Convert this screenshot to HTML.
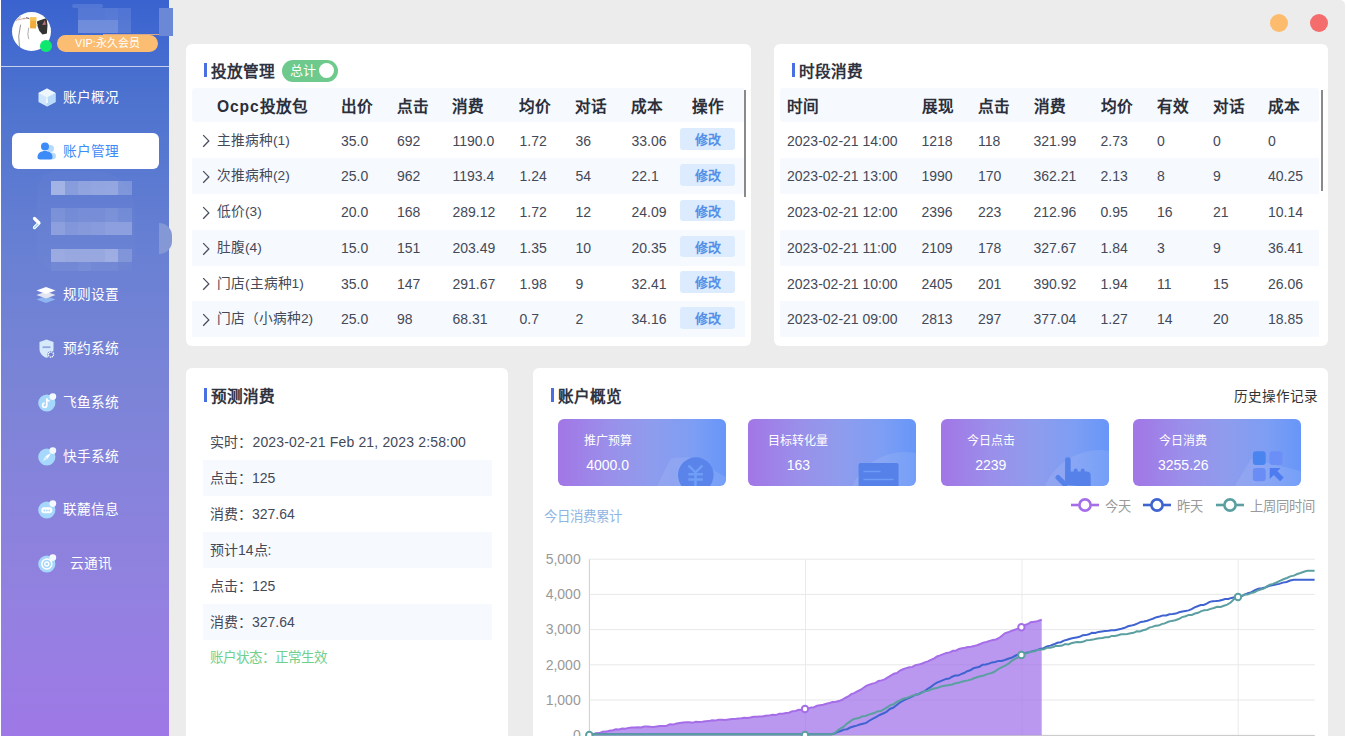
<!DOCTYPE html><html lang="zh-CN"><head><meta charset="utf-8"><style>
*{margin:0;padding:0;box-sizing:border-box;}
html,body{width:1346px;height:736px;overflow:hidden;background:#fff;font-family:"Liberation Sans",sans-serif;color:#333;}
div,span,svg{position:absolute;}
#side{left:1px;top:0;width:168px;height:736px;background:linear-gradient(180deg,#3a63cf 0%,#4f74cf 15%,#6880d3 34%,#7b84d7 53%,#9381e0 81.5%,#9e78e6 100%);}
.sep{left:0;top:66px;width:168px;height:1px;background:#c6cfee;}
.avatar{left:12px;top:12.5px;width:39px;height:39px;border-radius:50%;background:#fff;overflow:hidden;}
.dot{left:39.2px;top:40.3px;width:11.6px;height:11.6px;border-radius:50%;background:#0fe86e;}
.vip{left:56px;top:35px;width:101px;height:17px;border-radius:8.5px;background:#fbbd72;color:#fff;font-size:11px;line-height:17px;text-align:center;white-space:nowrap;}
.mi{left:0;width:168px;height:36px;color:#fff;font-size:13.7px;font-weight:300;white-space:nowrap;}
.mi .tx{left:62.3px;top:0.6px;line-height:36px;}
.mi svg{position:absolute;left:35px;top:8px;}
.act{left:11px;width:147px;background:#fff;border-radius:6px;color:#3d8bf7;}
.act .tx{left:52px;}
.act svg{left:24px;}
.card{background:#fff;border-radius:6px;}
.ttl{font-size:15.6px;font-weight:bold;color:#2f3341;line-height:23.6px;white-space:nowrap;}
.bar{width:3px;height:14px;background:#4a6fe0;}
.row{height:36px;line-height:36px;font-size:14px;color:#444958;white-space:nowrap;}
.row span{top:0;}
.hd{font-weight:bold;color:#2b2f3a;font-size:15.6px;height:33.8px;line-height:33.8px;background:#f6f9fe;border-radius:3px;}
.alt{background:#f6f9fe;}
.row .btn{top:5.7px;width:55.5px;height:21.7px;line-height:23.3px;background:#dcebfd;color:#5590e8;font-size:13px;font-weight:bold;text-align:center;border-radius:3px;}
.sb{width:2px;background:#8a8a8a;}
.stat{height:67px;border-radius:6px;background:linear-gradient(90deg,#a276e6 0%,#9a8fea 30%,#8f9ced 55%,#7d9ef4 80%,#6796f8 100%);overflow:hidden;}
.stat .lb{width:100px;left:0;top:13.5px;text-align:center;color:#fff;font-size:12px;line-height:16px;white-space:nowrap;}
.stat .vl{width:100px;left:0;top:37px;text-align:center;color:#fff;font-size:14px;line-height:18px;white-space:nowrap;}
.lg{font-size:13.3px;color:#999;line-height:16px;white-space:nowrap;}
.yl{font-size:14px;color:#999;line-height:16px;text-align:right;width:50px;white-space:nowrap;}
.info{height:36px;line-height:36px;font-size:14px;color:#444958;white-space:nowrap;}
</style></head><body>
<div style="left:1px;top:0;width:1344px;height:736px;background:#ececec;border-radius:0 5px 0 0;"></div>
<div id="side">
<div class="sep"></div>
<div style="left:70.6px;top:4px;width:31px;height:3.5px;border-radius:2px;background:rgba(255,255,255,0.12);"></div>
<div style="left:76.9px;top:8px;width:13.4px;height:12px;background:rgba(255,255,255,0.13);"></div>
<div style="left:76.9px;top:20px;width:13.4px;height:12.6px;background:rgba(255,255,255,0.25);"></div>
<div style="left:90.30000000000001px;top:8px;width:13.4px;height:12px;background:rgba(255,255,255,0.13);"></div>
<div style="left:90.30000000000001px;top:20px;width:13.4px;height:12.6px;background:rgba(255,255,255,0.25);"></div>
<div style="left:103.7px;top:8px;width:13.4px;height:12px;background:rgba(255,255,255,0.14);"></div>
<div style="left:103.7px;top:20px;width:13.4px;height:12.6px;background:rgba(255,255,255,0.25);"></div>
<div style="left:117.10000000000001px;top:8px;width:13.4px;height:12px;background:rgba(255,255,255,0.11);"></div>
<div style="left:117.10000000000001px;top:20px;width:13.4px;height:12.6px;background:rgba(255,255,255,0.12);"></div>
<div style="left:102px;top:33.8px;width:57px;height:1.6px;background:#d8a986;"></div>
<div class="avatar" style="left:11px;top:12.3px;"><svg width="39" height="39" viewBox="0 0 39 39" style="position:absolute;left:0;top:0"><path d="M34.6 6.1 L35.5 13.3 L34.9 21.5 L30.5 22.4 L27.4 18.9 L25.5 13.9 L24.9 9.6 L27.4 8.6 L31.7 7.1z" fill="#333"/><path d="M30.2 13 L33 8 L33.9 12.7z" fill="#c0707a"/><path d="M18.3 5.2 L24.3 5.6 L24 16.5 L18 16.2z" fill="#f2aa38"/><path d="M18.3 5.2 L24.3 5.6 L24.2 9 L18.2 8.6z" fill="#f4c659"/><path d="M24.5 12 L26.2 12.8 L24.5 14z" fill="#f4c659"/><path d="M4 9 L9 4.5 M6 8 L13 6 M11 7 L17 6" stroke="#b8867e" stroke-width="0.8" fill="none" opacity="0.8"/><path d="M8.6 12.7 Q5.5 24 7.4 35" stroke="#666" stroke-width="0.7" fill="none"/><path d="M16.7 15.8 Q15 23 16.7 27.1" stroke="#777" stroke-width="0.6" fill="none"/><path d="M14 5.5 L17.5 6.8" stroke="#555" stroke-width="0.8"/></svg></div><div class="dot"></div>
<div class="vip">VIP:永久会员</div>
<div class="mi" style="top:79px;"><svg width="20" height="21" viewBox="0 0 20 21" style="left:35.5px;top:8px"><polygon points="10,1.5 18.5,6 18.5,15 10,19.5 1.5,15 1.5,6" fill="#cfe6fc"/><polygon points="10,1.5 18.5,6 10,10.5 1.5,6" fill="#eef6fe"/><polygon points="10,10.5 18.5,6 18.5,15 10,19.5" fill="#b9daf9"/><path d="M10 10.5v4" stroke="#fff" stroke-width="1.2"/><circle cx="10" cy="15" r="1" fill="#fff"/></svg><span class="tx">账户概况</span></div>
<div class="mi act" style="top:133px;height:36px;"><svg width="22" height="22" viewBox="0 0 22 22" style="left:23.5px;top:7.5px"><circle cx="14.5" cy="7.5" r="3.5" fill="#b6dafb"/><ellipse cx="15.5" cy="15" rx="4.5" ry="3.5" fill="#b6dafb"/><circle cx="9" cy="5.5" r="4" fill="#3d8bf7"/><path d="M1.5 16c0-4 3.5-6 7.5-6s7.5 2 7.5 6c0 1.8-1 2.5-2.5 2.5h-10c-1.5 0-2.5-.7-2.5-2.5z" fill="#3d8bf7"/></svg><span class="tx" style="left:51.3px">账户管理</span></div>
<div style="left:50.1px;top:181.3px;width:13.45px;height:13.5px;background:rgba(255,255,255,0.42);"></div>
<div style="left:63.55px;top:181.3px;width:13.45px;height:13.5px;background:rgba(255,255,255,0.25);"></div>
<div style="left:77.0px;top:181.3px;width:13.45px;height:13.5px;background:rgba(255,255,255,0.3);"></div>
<div style="left:90.44999999999999px;top:181.3px;width:13.45px;height:13.5px;background:rgba(255,255,255,0.32);"></div>
<div style="left:103.9px;top:181.3px;width:13.45px;height:13.5px;background:rgba(255,255,255,0.33);"></div>
<div style="left:117.35px;top:181.3px;width:13.45px;height:13.5px;background:rgba(255,255,255,0.2);"></div>
<div style="left:50.1px;top:208.2px;width:13.45px;height:13.5px;background:rgba(255,255,255,0.15);"></div>
<div style="left:63.55px;top:208.2px;width:13.45px;height:13.5px;background:rgba(255,255,255,0.1);"></div>
<div style="left:77.0px;top:208.2px;width:13.45px;height:13.5px;background:rgba(255,255,255,0.12);"></div>
<div style="left:90.44999999999999px;top:208.2px;width:13.45px;height:13.5px;background:rgba(255,255,255,0.12);"></div>
<div style="left:103.9px;top:208.2px;width:13.45px;height:13.5px;background:rgba(255,255,255,0.15);"></div>
<div style="left:117.35px;top:208.2px;width:13.45px;height:13.5px;background:rgba(255,255,255,0.1);"></div>
<div style="left:50.1px;top:221.7px;width:13.45px;height:13.4px;background:rgba(255,255,255,0.25);"></div>
<div style="left:63.55px;top:221.7px;width:13.45px;height:13.4px;background:rgba(255,255,255,0.18);"></div>
<div style="left:77.0px;top:221.7px;width:13.45px;height:13.4px;background:rgba(255,255,255,0.2);"></div>
<div style="left:90.44999999999999px;top:221.7px;width:13.45px;height:13.4px;background:rgba(255,255,255,0.22);"></div>
<div style="left:103.9px;top:221.7px;width:13.45px;height:13.4px;background:rgba(255,255,255,0.25);"></div>
<div style="left:117.35px;top:221.7px;width:13.45px;height:13.4px;background:rgba(255,255,255,0.25);"></div>
<div style="left:50.1px;top:249px;width:13.45px;height:13.3px;background:rgba(255,255,255,0.32);"></div>
<div style="left:63.55px;top:249px;width:13.45px;height:13.3px;background:rgba(255,255,255,0.3);"></div>
<div style="left:77.0px;top:249px;width:13.45px;height:13.3px;background:rgba(255,255,255,0.3);"></div>
<div style="left:90.44999999999999px;top:249px;width:13.45px;height:13.3px;background:rgba(255,255,255,0.3);"></div>
<div style="left:103.9px;top:249px;width:13.45px;height:13.3px;background:rgba(255,255,255,0.35);"></div>
<div style="left:117.35px;top:249px;width:13.45px;height:13.3px;background:rgba(255,255,255,0.15);"></div>
<div style="left:50.1px;top:262.3px;width:13.45px;height:8.7px;background:rgba(255,255,255,0.05);"></div>
<div style="left:63.55px;top:262.3px;width:13.45px;height:8.7px;background:rgba(255,255,255,0.05);"></div>
<div style="left:77.0px;top:262.3px;width:13.45px;height:8.7px;background:rgba(255,255,255,0.08);"></div>
<div style="left:90.44999999999999px;top:262.3px;width:13.45px;height:8.7px;background:rgba(255,255,255,0.05);"></div>
<div style="left:103.9px;top:262.3px;width:13.45px;height:8.7px;background:rgba(255,255,255,0.05);"></div>
<div style="left:117.35px;top:262.3px;width:13.45px;height:8.7px;background:rgba(255,255,255,0.02);"></div>
<div style="left:36px;top:171px;width:98px;height:100px;border-radius:20px 40px 20px 20px;background:rgba(255,255,255,0.02);"></div>
<svg width="10" height="14" viewBox="0 0 10 14" style="left:31px;top:216px"><path d="M2.5 2.5l4.5 4.5-4.5 4.5" stroke="#fff" stroke-width="3.2" stroke-linecap="round" stroke-linejoin="round" fill="none"/><path d="M5.8 8.2l-3.2 3.2" stroke="#8fd0fa" stroke-width="1.3" stroke-linecap="round"/></svg>
<div class="mi" style="top:276px;"><svg width="20" height="22" viewBox="0 0 20 22" style="left:35px;top:8px"><polygon points="10,12 19.5,15.5 10,19 0.5,15.5" fill="#8db5ef"/><polygon points="10,7.5 19.5,11 10,14.5 0.5,11" fill="#e3e6f0"/><polygon points="10,3 19.5,6.5 10,10 0.5,6.5" fill="#ffffff"/></svg><span class="tx">规则设置</span></div>
<div class="mi" style="top:330px;"><svg width="20" height="22" viewBox="0 0 20 22" style="left:36px;top:8px"><path d="M9.5 1.5l7 2.5v7c0 4.5-3 7.3-7 8.8-4-1.5-7-4.3-7-8.8v-7z" fill="#d6eafc"/><rect x="5.5" y="8.3" width="8" height="1.8" fill="#8fa8e6"/><circle cx="14" cy="16.5" r="3.6" fill="#6f80d6"/><circle cx="14" cy="16.5" r="2.6" fill="none" stroke="#fff" stroke-width="1.4" stroke-dasharray="1.3 0.7"/></svg><span class="tx">预约系统</span></div>
<div class="mi" style="top:384px;"><svg width="22" height="22" viewBox="0 0 22 22" style="left:34px;top:7px"><circle cx="11.8" cy="12" r="8.6" fill="#a5d8fc"/><circle cx="17.8" cy="5.6" r="3.4" fill="#f4f8ff"/><path d="M11.8 7.5v6.8a2.1 2.1 0 1 1-2.1-2.1" stroke="#fff" stroke-width="1.7" fill="none"/><path d="M11.8 7.6c.3 1.6 1.3 2.4 2.8 2.5" stroke="#fff" stroke-width="1.5" fill="none"/></svg><span class="tx">飞鱼系统</span></div>
<div class="mi" style="top:438px;"><svg width="22" height="22" viewBox="0 0 22 22" style="left:34px;top:7px"><circle cx="11.8" cy="12" r="8.6" fill="#a5d8fc"/><circle cx="17.8" cy="5.6" r="3.4" fill="#f4f8ff"/><path d="M16 8l-3 5.3-5.2 3 3-5.3z" fill="#fff"/><path d="M13 13.3l-5.2 3 3-5.3z" fill="#d8eefe"/></svg><span class="tx">快手系统</span></div>
<div class="mi" style="top:491px;"><svg width="22" height="22" viewBox="0 0 22 22" style="left:34px;top:7px"><circle cx="11.8" cy="12" r="8.6" fill="#a5d8fc"/><circle cx="17.8" cy="5.6" r="3.4" fill="#f4f8ff"/><rect x="6.3" y="9.3" width="11" height="6" rx="2.8" fill="#fff"/><circle cx="9.3" cy="12.5" r="0.9" fill="#a5d8fc"/><circle cx="11.8" cy="12.5" r="0.9" fill="#a5d8fc"/><circle cx="14.3" cy="12.5" r="0.9" fill="#a5d8fc"/></svg><span class="tx">联麓信息</span></div>
<div class="mi" style="top:545px;"><svg width="22" height="22" viewBox="0 0 22 22" style="left:34px;top:7px"><circle cx="11.8" cy="12" r="8.6" fill="#a5d8fc"/><circle cx="17.8" cy="5.6" r="3.4" fill="#f4f8ff"/><circle cx="11.8" cy="12" r="5" fill="none" stroke="#fff" stroke-width="1.5"/><circle cx="11.8" cy="12" r="2" fill="none" stroke="#fff" stroke-width="1.3"/></svg><span class="tx" style="left:69px">云通讯</span></div>
</div>
<div style="left:159px;top:8px;width:13.5px;height:27.7px;background:#6a88d6;"></div>
<div style="left:159px;top:222.8px;width:13.3px;height:31.4px;border-radius:0 16px 16px 0/0 15.7px 15.7px 0;background:#8498d6;"></div>
<div style="left:1269.5px;top:13.6px;width:18.2px;height:18.2px;border-radius:50%;background:#fdbb6d;"></div>
<div style="left:1309.9px;top:13.6px;width:18.2px;height:18.2px;border-radius:50%;background:#f56c6c;"></div>
<div class="card" style="left:186px;top:44px;width:565px;height:302px;">
<div class="bar" style="left:18px;top:19px;"></div>
<div class="ttl" style="left:25px;top:16px;">投放管理</div>
<div style="left:96px;top:15.5px;width:56px;height:22px;border-radius:11px;background:#6dca8c;"><span style="left:8px;top:0;line-height:22px;color:#fff;font-size:13px;">总计</span><span style="left:37px;top:3.5px;width:15px;height:15px;border-radius:50%;background:#fff;"></span></div>
<div class="row hd" style="left:5.699999999999989px;top:44.2px;width:553px;"><span style="left:25.30000000000001px;line-height:37.2px"><i style="font-style:normal;letter-spacing:0.9px">Ocpc</i>投放包</span><span style="left:149.3px;line-height:37.2px">出价</span><span style="left:205.3px;line-height:37.2px">点击</span><span style="left:260.8px;line-height:37.2px">消费</span><span style="left:327.8px;line-height:37.2px">均价</span><span style="left:383.8px;line-height:37.2px">对话</span><span style="left:439.8px;line-height:37.2px">成本</span><span style="left:500.3px;line-height:37.2px">操作</span></div>
<div class="row" style="left:5.699999999999989px;top:78.6px;width:553px;"><svg width="9" height="14" viewBox="0 0 9 14" style="left:10.600000000000023px;top:11.8px"><path d="M1.2 1.1l5.6 5.8-5.6 5.8" stroke="#4a4f5e" stroke-width="1.3" fill="none"/></svg><span style="left:25.30000000000001px;font-size:13.7px">主推病种(1)</span><span style="left:149.3px">35.0</span><span style="left:205.3px">692</span><span style="left:260.8px">1190.0</span><span style="left:327.8px">1.72</span><span style="left:383.8px">36</span><span style="left:439.8px">33.06</span><span class="btn" style="left:488.3px;">修改</span></div>
<div class="row alt" style="left:5.699999999999989px;top:114.35px;width:553px;"><svg width="9" height="14" viewBox="0 0 9 14" style="left:10.600000000000023px;top:11.8px"><path d="M1.2 1.1l5.6 5.8-5.6 5.8" stroke="#4a4f5e" stroke-width="1.3" fill="none"/></svg><span style="left:25.30000000000001px;font-size:13.7px">次推病种(2)</span><span style="left:149.3px">25.0</span><span style="left:205.3px">962</span><span style="left:260.8px">1193.4</span><span style="left:327.8px">1.24</span><span style="left:383.8px">54</span><span style="left:439.8px">22.1</span><span class="btn" style="left:488.3px;">修改</span></div>
<div class="row" style="left:5.699999999999989px;top:150.1px;width:553px;"><svg width="9" height="14" viewBox="0 0 9 14" style="left:10.600000000000023px;top:11.8px"><path d="M1.2 1.1l5.6 5.8-5.6 5.8" stroke="#4a4f5e" stroke-width="1.3" fill="none"/></svg><span style="left:25.30000000000001px;font-size:13.7px">低价(3)</span><span style="left:149.3px">20.0</span><span style="left:205.3px">168</span><span style="left:260.8px">289.12</span><span style="left:327.8px">1.72</span><span style="left:383.8px">12</span><span style="left:439.8px">24.09</span><span class="btn" style="left:488.3px;">修改</span></div>
<div class="row alt" style="left:5.699999999999989px;top:185.85px;width:553px;"><svg width="9" height="14" viewBox="0 0 9 14" style="left:10.600000000000023px;top:11.8px"><path d="M1.2 1.1l5.6 5.8-5.6 5.8" stroke="#4a4f5e" stroke-width="1.3" fill="none"/></svg><span style="left:25.30000000000001px;font-size:13.7px">肚腹(4)</span><span style="left:149.3px">15.0</span><span style="left:205.3px">151</span><span style="left:260.8px">203.49</span><span style="left:327.8px">1.35</span><span style="left:383.8px">10</span><span style="left:439.8px">20.35</span><span class="btn" style="left:488.3px;">修改</span></div>
<div class="row" style="left:5.699999999999989px;top:221.60000000000002px;width:553px;"><svg width="9" height="14" viewBox="0 0 9 14" style="left:10.600000000000023px;top:11.8px"><path d="M1.2 1.1l5.6 5.8-5.6 5.8" stroke="#4a4f5e" stroke-width="1.3" fill="none"/></svg><span style="left:25.30000000000001px;font-size:13.7px">门店(主病种1)</span><span style="left:149.3px">35.0</span><span style="left:205.3px">147</span><span style="left:260.8px">291.67</span><span style="left:327.8px">1.98</span><span style="left:383.8px">9</span><span style="left:439.8px">32.41</span><span class="btn" style="left:488.3px;">修改</span></div>
<div class="row alt" style="left:5.699999999999989px;top:257.35px;width:553px;"><svg width="9" height="14" viewBox="0 0 9 14" style="left:10.600000000000023px;top:11.8px"><path d="M1.2 1.1l5.6 5.8-5.6 5.8" stroke="#4a4f5e" stroke-width="1.3" fill="none"/></svg><span style="left:25.30000000000001px;font-size:13.7px">门店（小病种2)</span><span style="left:149.3px">25.0</span><span style="left:205.3px">98</span><span style="left:260.8px">68.31</span><span style="left:327.8px">0.7</span><span style="left:383.8px">2</span><span style="left:439.8px">34.16</span><span class="btn" style="left:488.3px;">修改</span></div>
<div class="sb" style="left:557.5px;top:45.5px;height:107px;"></div>
</div>
<div class="card" style="left:774px;top:44px;width:554px;height:302px;">
<div class="bar" style="left:18px;top:19px;"></div>
<div class="ttl" style="left:25px;top:16px;">时段消费</div>
<div class="row hd" style="left:6px;top:44.2px;width:539px;"><span style="left:7px;line-height:37.2px">时间</span><span style="left:141.5px;line-height:37.2px">展现</span><span style="left:198px;line-height:37.2px">点击</span><span style="left:253.5px;line-height:37.2px">消费</span><span style="left:320.5px;line-height:37.2px">均价</span><span style="left:377px;line-height:37.2px">有效</span><span style="left:433px;line-height:37.2px">对话</span><span style="left:488px;line-height:37.2px">成本</span></div>
<div class="row" style="left:6px;top:78.6px;width:539px;"><span style="left:7px">2023-02-21 14:00</span><span style="left:141.5px">1218</span><span style="left:198px">118</span><span style="left:253.5px">321.99</span><span style="left:320.5px">2.73</span><span style="left:377px">0</span><span style="left:433px">0</span><span style="left:488px">0</span></div>
<div class="row alt" style="left:6px;top:114.35px;width:539px;"><span style="left:7px">2023-02-21 13:00</span><span style="left:141.5px">1990</span><span style="left:198px">170</span><span style="left:253.5px">362.21</span><span style="left:320.5px">2.13</span><span style="left:377px">8</span><span style="left:433px">9</span><span style="left:488px">40.25</span></div>
<div class="row" style="left:6px;top:150.1px;width:539px;"><span style="left:7px">2023-02-21 12:00</span><span style="left:141.5px">2396</span><span style="left:198px">223</span><span style="left:253.5px">212.96</span><span style="left:320.5px">0.95</span><span style="left:377px">16</span><span style="left:433px">21</span><span style="left:488px">10.14</span></div>
<div class="row alt" style="left:6px;top:185.85px;width:539px;"><span style="left:7px">2023-02-21 11:00</span><span style="left:141.5px">2109</span><span style="left:198px">178</span><span style="left:253.5px">327.67</span><span style="left:320.5px">1.84</span><span style="left:377px">3</span><span style="left:433px">9</span><span style="left:488px">36.41</span></div>
<div class="row" style="left:6px;top:221.60000000000002px;width:539px;"><span style="left:7px">2023-02-21 10:00</span><span style="left:141.5px">2405</span><span style="left:198px">201</span><span style="left:253.5px">390.92</span><span style="left:320.5px">1.94</span><span style="left:377px">11</span><span style="left:433px">15</span><span style="left:488px">26.06</span></div>
<div class="row alt" style="left:6px;top:257.35px;width:539px;"><span style="left:7px">2023-02-21 09:00</span><span style="left:141.5px">2813</span><span style="left:198px">297</span><span style="left:253.5px">377.04</span><span style="left:320.5px">1.27</span><span style="left:377px">14</span><span style="left:433px">20</span><span style="left:488px">18.85</span></div>
<div class="sb" style="left:547px;top:45.5px;height:101px;"></div>
</div>
<div class="card" style="left:186px;top:368px;width:322px;height:400px;">
<div class="bar" style="left:18px;top:20px;"></div>
<div class="ttl" style="left:25px;top:17px;">预测消费</div>
<div class="info" style="left:17px;top:56px;width:289px;"><span style="left:7px;top:0;letter-spacing:0.16px;">实时：2023-02-21 Feb 21, 2023 2:58:00</span></div>
<div class="info" style="left:17px;top:92px;width:289px;background:#f6f9fe;"><span style="left:7px;top:0;">点击：125</span></div>
<div class="info" style="left:17px;top:128px;width:289px;"><span style="left:7px;top:0;">消费：327.64</span></div>
<div class="info" style="left:17px;top:164px;width:289px;background:#f6f9fe;"><span style="left:7px;top:0;">预计14点:</span></div>
<div class="info" style="left:17px;top:200px;width:289px;"><span style="left:7px;top:0;">点击：125</span></div>
<div class="info" style="left:17px;top:236px;width:289px;background:#f6f9fe;"><span style="left:7px;top:0;">消费：327.64</span></div>
<div class="info" style="left:17px;top:272px;width:289px;color:#6fd08e;font-size:13.5px;"><span style="left:7px;top:0;">账户状态：正常生效</span></div>
</div>
<div class="card" style="left:533px;top:368px;width:795px;height:400px;">
<div class="bar" style="left:18px;top:20px;"></div>
<div class="ttl" style="left:25px;top:17px;">账户概览</div>
<div style="left:701px;top:19.5px;font-size:13.6px;line-height:18px;color:#333;white-space:nowrap;">历史操作记录</div>
<div class="stat" style="left:24.600000000000023px;top:51px;width:168px;"><svg width="168" height="67" style="left:0;top:0"><path d="M99 67 L112 41 Q114 38.5 118 38.5 L132 38.5 L168 58 L168 67z" fill="rgba(255,255,255,0.09)"/><circle cx="137.8" cy="56.1" r="17.8" fill="#5a84ea"/><path d="M130.5 46.5l7 6.8 7-6.8M137.5 53.3v14M130.3 55.3h14.6M130.3 60.5h14.6" stroke="#6f9ef7" stroke-width="2.5" fill="none"/></svg><span class="lb">推广预算</span><span class="vl">4000.0</span></div>
<div class="stat" style="left:215.39999999999998px;top:51px;width:168px;"><svg width="168" height="67" style="left:0;top:0"><circle cx="157" cy="91" r="58" fill="rgba(255,255,255,0.09)"/><path d="M110.6 68V46a2 2 0 0 1 2-2h36a2 2 0 0 1 2 2v22z" fill="#5681e9"/><path d="M115.5 52.5h17M115.5 60.5h30" stroke="#6d9cf6" stroke-width="1.6"/></svg><span class="lb">目标转化量</span><span class="vl">163</span></div>
<div class="stat" style="left:407.79999999999995px;top:51px;width:168px;"><svg width="168" height="67" style="left:0;top:0"><circle cx="159" cy="91" r="60" fill="rgba(255,255,255,0.09)"/><path d="M124.1 66V41a2.8 2.8 0 0 1 5.6 0v11.5h3v-1a2 2 0 0 1 4 0v1h3v-1a2 2 0 0 1 4 0v1h2a4 4 0 0 1 4 4V68z" fill="#5681e9"/><path d="M117 58.5l7 7" stroke="#5681e9" stroke-width="5" stroke-linecap="round"/></svg><span class="lb">今日点击</span><span class="vl">2239</span></div>
<div class="stat" style="left:600.3px;top:51px;width:168px;"><svg width="168" height="67" style="left:0;top:0"><path d="M100 70 L118 40 L168 52 L168 70z" fill="rgba(255,255,255,0.09)"/><rect x="119.9" y="32.2" width="12.8" height="13.8" rx="3" fill="#4a85ef"/><rect x="136.5" y="32.2" width="13" height="13.8" rx="3" fill="#6c8ff7"/><rect x="119.9" y="49" width="12.8" height="13.3" rx="3" fill="#6a8df5"/><path d="M136.7 49h11l-3.3 3.3 6.3 6.3-3.6 3.6-6.3-6.3-4.1 4.1z" fill="#4e7cf0"/></svg><span class="lb">今日消费</span><span class="vl">3255.26</span></div>
<div style="left:11px;top:140px;font-size:13.5px;color:#8fb5e3;line-height:18px;white-space:nowrap;">今日消费累计</div>
<svg style="position:absolute;left:537.5999999999999px;top:129.7px" width="28" height="14"><line x1="0" y1="7" x2="28" y2="7" stroke="#a56ee8" stroke-width="2.6"/><circle cx="14" cy="7" r="5.6" fill="#fff" stroke="#a56ee8" stroke-width="2.6"/></svg>
<div class="lg" style="left:571.5999999999999px;top:131px;">今天</div>
<svg style="position:absolute;left:610px;top:129.7px" width="28" height="14"><line x1="0" y1="7" x2="28" y2="7" stroke="#3f63d0" stroke-width="2.6"/><circle cx="14" cy="7" r="5.6" fill="#fff" stroke="#3f63d0" stroke-width="2.6"/></svg>
<div class="lg" style="left:644px;top:131px;">昨天</div>
<svg style="position:absolute;left:682.8px;top:129.7px" width="28" height="14"><line x1="0" y1="7" x2="28" y2="7" stroke="#5b9fa1" stroke-width="2.6"/><circle cx="14" cy="7" r="5.6" fill="#fff" stroke="#5b9fa1" stroke-width="2.6"/></svg>
<div class="lg" style="left:716.8px;top:131px;">上周同时间</div>
</div>
<svg style="position:absolute;left:0;top:0" width="1346" height="736"><line x1="589.4" y1="559.2" x2="1314.8" y2="559.2" stroke="#e8e8e8" stroke-width="1"/><line x1="589.4" y1="594.4" x2="1314.8" y2="594.4" stroke="#e8e8e8" stroke-width="1"/><line x1="589.4" y1="629.6" x2="1314.8" y2="629.6" stroke="#e8e8e8" stroke-width="1"/><line x1="589.4" y1="664.8" x2="1314.8" y2="664.8" stroke="#e8e8e8" stroke-width="1"/><line x1="589.4" y1="700" x2="1314.8" y2="700" stroke="#e8e8e8" stroke-width="1"/><line x1="589.4" y1="735.2" x2="1314.8" y2="735.2" stroke="#e8e8e8" stroke-width="1"/><line x1="805.5" y1="559.2" x2="805.5" y2="736" stroke="#eaeaea" stroke-width="1"/><line x1="1022" y1="559.2" x2="1022" y2="736" stroke="#eaeaea" stroke-width="1"/><line x1="1238.2" y1="559.2" x2="1238.2" y2="736" stroke="#eaeaea" stroke-width="1"/><line x1="589.4" y1="559.2" x2="589.4" y2="736" stroke="#cfcfcf" stroke-width="1"/><line x1="589.4" y1="735.5" x2="1314.8" y2="735.5" stroke="#cccccc" stroke-width="1"/><polygon points="589.3,735 592.7,734.1 596.0,733.2 599.4,733.1 602.7,731.7 606.1,731.6 609.4,730.7 612.8,730.2 615.9,729.3 619.1,729.5 622.2,728.6 625.4,728.7 628.5,727.9 631.7,727.5 634.9,727.6 638.0,727.3 641.1,727.5 644.2,726.5 647.4,726.5 650.5,726.8 653.6,727.0 656.8,726.4 659.9,726.0 663.0,726.0 666.4,725.9 669.8,724.2 673.2,724.6 676.6,723.5 679.8,723.0 683.0,722.6 686.2,722.3 689.5,722.3 692.7,722.7 695.9,721.7 699.1,721.9 702.3,721.7 705.6,721.2 708.8,721.1 712.0,720.3 715.2,720.6 718.5,719.8 721.8,719.7 725.1,720.0 728.5,719.4 731.8,718.9 735.1,719.0 738.4,718.6 741.4,718.2 744.4,717.7 747.4,718.0 750.4,717.5 753.4,716.7 756.4,716.8 759.4,716.4 762.4,716.5 765.4,715.7 768.9,715.6 772.4,714.7 775.8,715.1 779.3,713.7 782.8,713.8 786.0,713.0 789.1,712.7 792.3,711.3 795.5,711.0 798.7,709.8 801.8,709.9 805.0,709.0 808.0,708.6 811.0,707.6 814.0,707.2 817.0,705.8 820.0,705.3 823.2,704.7 826.3,703.8 829.5,703.0 832.7,702.1 835.9,701.8 839.0,701.1 842.2,699.8 845.2,698.0 848.2,696.5 851.2,694.1 854.2,693.1 857.2,691.3 860.2,690.0 863.2,688.0 866.2,685.9 869.3,684.6 872.4,683.6 875.5,682.9 878.5,681.0 881.6,680.4 884.7,679.4 887.8,677.3 890.8,675.6 893.9,673.8 897.0,673.0 900.0,670.5 903.1,669.3 906.2,668.1 909.3,667.3 912.4,666.9 915.4,665.1 918.5,664.6 921.6,663.7 924.7,662.4 927.8,661.4 930.9,659.9 933.9,658.6 937.0,656.5 940.1,655.4 943.3,654.1 946.5,652.9 949.8,652.4 953.0,650.8 956.0,650.7 959.0,649.0 962.0,648.3 965.0,647.7 968.0,647.0 971.0,646.7 974.0,646.1 977.0,645.3 980.2,644.0 983.3,642.6 986.5,642.0 989.7,640.9 992.9,640.1 996.0,639.5 999.2,637.9 1004.8,633.3 1008.1,632.3 1011.4,630.9 1014.8,629.8 1018.1,628.6 1021.4,627.2 1024.5,625.0 1027.5,624.3 1030.6,622.2 1034.0,621.8 1037.4,621.2 1040.8,620.0 1041.7,619.8 1041.7,735.2 589.3,735.2" fill="#9d6ce8" fill-opacity="0.7"/><polyline points="589.3,735 592.7,734.1 596.0,733.2 599.4,733.1 602.7,731.7 606.1,731.6 609.4,730.7 612.8,730.2 615.9,729.3 619.1,729.5 622.2,728.6 625.4,728.7 628.5,727.9 631.7,727.5 634.9,727.6 638.0,727.3 641.1,727.5 644.2,726.5 647.4,726.5 650.5,726.8 653.6,727.0 656.8,726.4 659.9,726.0 663.0,726.0 666.4,725.9 669.8,724.2 673.2,724.6 676.6,723.5 679.8,723.0 683.0,722.6 686.2,722.3 689.5,722.3 692.7,722.7 695.9,721.7 699.1,721.9 702.3,721.7 705.6,721.2 708.8,721.1 712.0,720.3 715.2,720.6 718.5,719.8 721.8,719.7 725.1,720.0 728.5,719.4 731.8,718.9 735.1,719.0 738.4,718.6 741.4,718.2 744.4,717.7 747.4,718.0 750.4,717.5 753.4,716.7 756.4,716.8 759.4,716.4 762.4,716.5 765.4,715.7 768.9,715.6 772.4,714.7 775.8,715.1 779.3,713.7 782.8,713.8 786.0,713.0 789.1,712.7 792.3,711.3 795.5,711.0 798.7,709.8 801.8,709.9 805.0,709.0 808.0,708.6 811.0,707.6 814.0,707.2 817.0,705.8 820.0,705.3 823.2,704.7 826.3,703.8 829.5,703.0 832.7,702.1 835.9,701.8 839.0,701.1 842.2,699.8 845.2,698.0 848.2,696.5 851.2,694.1 854.2,693.1 857.2,691.3 860.2,690.0 863.2,688.0 866.2,685.9 869.3,684.6 872.4,683.6 875.5,682.9 878.5,681.0 881.6,680.4 884.7,679.4 887.8,677.3 890.8,675.6 893.9,673.8 897.0,673.0 900.0,670.5 903.1,669.3 906.2,668.1 909.3,667.3 912.4,666.9 915.4,665.1 918.5,664.6 921.6,663.7 924.7,662.4 927.8,661.4 930.9,659.9 933.9,658.6 937.0,656.5 940.1,655.4 943.3,654.1 946.5,652.9 949.8,652.4 953.0,650.8 956.0,650.7 959.0,649.0 962.0,648.3 965.0,647.7 968.0,647.0 971.0,646.7 974.0,646.1 977.0,645.3 980.2,644.0 983.3,642.6 986.5,642.0 989.7,640.9 992.9,640.1 996.0,639.5 999.2,637.9 1004.8,633.3 1008.1,632.3 1011.4,630.9 1014.8,629.8 1018.1,628.6 1021.4,627.2 1024.5,625.0 1027.5,624.3 1030.6,622.2 1034.0,621.8 1037.4,621.2 1040.8,620.0 1041.7,619.8" fill="none" stroke="#a56ee8" stroke-width="2"/><polyline points="589.3,734.2 592.3,734.2 595.3,734.2 598.4,734.2 601.4,734.2 604.4,734.2 607.4,734.2 610.5,734.2 613.5,734.2 616.5,734.2 619.5,734.2 622.5,734.2 625.6,734.2 628.6,734.2 631.6,734.2 634.6,734.2 637.7,734.2 640.7,734.2 643.7,734.2 646.7,734.2 649.8,734.2 652.8,734.2 655.8,734.2 658.8,734.2 661.8,734.2 664.9,734.2 667.9,734.2 670.9,734.2 673.9,734.2 677.0,734.2 680.0,734.2 683.0,734.2 686.0,734.2 689.0,734.2 692.1,734.2 695.1,734.2 698.1,734.2 701.1,734.2 704.2,734.2 707.2,734.2 710.2,734.2 713.2,734.2 716.2,734.2 719.3,734.2 722.3,734.2 725.3,734.2 728.3,734.2 731.4,734.2 734.4,734.2 737.4,734.2 740.4,734.2 743.4,734.2 746.5,734.2 749.5,734.2 752.5,734.2 755.5,734.2 758.6,734.2 761.6,734.2 764.6,734.2 767.6,734.2 770.6,734.2 773.7,734.2 776.7,734.2 779.7,734.2 782.7,734.2 785.8,734.2 788.8,734.2 791.8,734.2 794.8,734.2 797.9,734.2 800.9,734.2 803.9,734.2 806.9,734.2 809.9,734.2 813.0,734.2 816.0,734.2 819.0,734.2 822.0,734.2 825.1,734.2 828.1,734.2 831.1,734.2 834.3,733.5 837.5,732.0 840.7,731.0 843.9,729.6 847.1,729.2 850.2,727.5 853.4,726.5 856.6,725.6 859.8,724.5 863.0,723.7 866.2,722.9 869.6,720.5 873.0,718.6 876.4,716.9 879.7,715.0 883.1,713.5 886.5,711.8 889.8,709.0 893.1,707.8 896.5,705.3 899.8,702.5 903.1,700.7 906.2,699.0 909.3,697.8 912.4,696.4 915.4,694.7 918.5,694.2 921.6,692.4 924.7,691.1 927.8,688.7 930.9,686.8 933.9,684.5 937.0,682.7 940.1,681.3 943.1,680.1 946.1,678.9 949.1,678.6 952.1,676.7 955.1,675.5 958.1,675.6 961.1,674.1 964.1,673.0 967.2,671.2 970.3,670.3 973.4,668.3 976.4,667.5 979.5,666.7 982.6,664.7 985.8,664.5 988.9,663.6 992.1,662.4 995.3,661.9 998.5,660.9 1001.6,661.0 1004.8,660.0 1008.1,658.8 1011.4,657.8 1014.8,656.0 1018.1,654.5 1021.4,653.6 1024.5,653.2 1027.6,652.6 1030.7,651.7 1033.8,650.9 1036.9,650.1 1040.0,649.0 1043.5,648.2 1046.9,646.4 1050.4,645.6 1053.9,644.3 1057.3,642.8 1060.8,642.2 1063.9,640.6 1067.0,639.8 1070.2,638.8 1073.3,638.0 1076.4,637.4 1079.5,636.8 1082.7,635.3 1085.8,635.1 1088.9,634.3 1092.0,632.8 1095.3,633.0 1098.5,631.9 1101.8,631.4 1105.1,631.0 1108.4,630.7 1111.6,630.3 1114.9,630.3 1118.2,629.5 1121.4,628.8 1124.7,627.8 1128.0,626.3 1131.3,625.6 1134.5,624.7 1137.8,623.4 1140.9,621.9 1144.0,621.5 1147.2,620.8 1150.3,619.6 1153.4,618.5 1156.5,617.2 1159.7,616.5 1163.0,615.4 1166.2,615.5 1169.4,614.2 1172.7,614.1 1175.9,613.6 1179.1,612.3 1182.4,611.6 1185.6,611.0 1188.6,610.4 1191.6,609.1 1194.6,607.3 1197.6,606.2 1200.7,605.1 1203.7,605.0 1206.7,603.7 1209.7,601.9 1212.7,601.2 1215.8,601.1 1218.9,600.8 1222.0,600.0 1225.2,599.1 1228.3,598.9 1231.4,597.9 1234.5,597.3 1237.6,597.4 1241.1,596.5 1244.5,594.7 1248.0,593.1 1251.5,592.1 1254.9,590.1 1258.4,588.7 1261.9,588.3 1265.3,587.5 1268.8,586.0 1272.3,585.2 1275.7,584.5 1279.2,583.9 1282.8,582.6 1286.5,582.0 1290.2,580.5 1293.8,579.8 1297.3,579.8 1300.7,579.8 1304.2,579.8 1307.7,579.8 1311.1,579.8 1314.6,579.8" fill="none" stroke="#3f63d0" stroke-width="2"/><polyline points="589.3,734.2 592.3,734.2 595.3,734.2 598.3,734.2 601.3,734.2 604.3,734.2 607.4,734.2 610.4,734.2 613.4,734.2 616.4,734.2 619.4,734.2 622.4,734.2 625.4,734.2 628.4,734.2 631.4,734.2 634.4,734.2 637.4,734.2 640.4,734.2 643.5,734.2 646.5,734.2 649.5,734.2 652.5,734.2 655.5,734.2 658.5,734.2 661.5,734.2 664.5,734.2 667.5,734.2 670.5,734.2 673.5,734.2 676.6,734.2 679.6,734.2 682.6,734.2 685.6,734.2 688.6,734.2 691.6,734.2 694.6,734.2 697.6,734.2 700.6,734.2 703.6,734.2 706.6,734.2 709.6,734.2 712.7,734.2 715.7,734.2 718.7,734.2 721.7,734.2 724.7,734.2 727.7,734.2 730.7,734.2 733.7,734.2 736.7,734.2 739.7,734.2 742.7,734.2 745.7,734.2 748.8,734.2 751.8,734.2 754.8,734.2 757.8,734.2 760.8,734.2 763.8,734.2 766.8,734.2 769.8,734.2 772.8,734.2 775.8,734.2 778.8,734.2 781.9,734.2 784.9,734.2 787.9,734.2 790.9,734.2 793.9,734.2 796.9,734.2 799.9,734.2 802.9,734.2 805.9,734.2 808.9,734.2 811.9,734.2 814.9,734.2 818.0,734.2 821.0,734.2 824.0,734.2 827.0,734.2 830.0,734.2 833.0,734.2 836.4,731.6 839.8,728.8 843.1,727.2 846.5,724.0 849.9,721.6 853.3,719.2 856.4,718.4 859.5,717.8 862.5,716.3 865.6,716.0 868.7,714.6 871.8,713.7 874.8,712.8 877.9,711.2 881.0,710.9 884.2,709.1 887.3,707.1 890.5,705.1 893.6,704.3 896.8,701.9 899.9,700.5 903.1,698.8 906.2,698.1 909.3,696.9 912.4,695.6 915.4,694.8 918.5,693.9 921.6,693.1 924.7,691.3 927.8,690.9 930.9,689.5 933.9,688.5 937.0,688.1 940.1,686.8 943.2,686.1 946.3,685.5 949.3,685.0 952.4,684.5 955.5,683.2 958.6,682.7 961.6,681.8 964.7,681.1 967.8,680.4 970.9,679.6 974.0,678.3 977.0,677.3 980.1,676.2 983.2,675.8 986.3,674.4 989.3,673.6 992.4,672.7 995.5,671.1 998.7,668.8 1002.0,667.2 1005.2,665.7 1008.5,663.7 1011.7,660.9 1014.9,658.9 1018.2,657.3 1021.4,655.4 1024.7,653.8 1028.0,652.9 1031.4,651.6 1034.7,651.2 1038.0,649.9 1041.0,649.6 1044.0,649.2 1047.1,647.7 1050.1,647.7 1053.1,647.0 1056.1,645.8 1059.1,646.1 1062.1,645.6 1065.2,644.1 1068.2,644.4 1071.2,643.2 1074.3,642.6 1077.4,642.1 1080.6,642.2 1083.7,641.5 1086.8,640.2 1089.9,640.0 1093.0,639.6 1096.2,638.8 1099.3,638.2 1102.4,638.0 1105.5,637.3 1108.6,637.2 1111.8,635.9 1114.9,636.0 1118.0,635.3 1121.1,634.3 1124.2,634.2 1127.4,634.0 1130.5,633.3 1133.6,632.8 1136.7,631.3 1139.8,631.5 1143.0,630.3 1146.1,629.6 1149.2,627.6 1152.3,626.9 1155.4,625.7 1158.6,625.6 1161.7,624.1 1164.8,623.4 1168.3,621.8 1171.7,620.9 1175.2,620.3 1178.7,619.0 1182.1,617.1 1185.6,616.2 1188.7,614.9 1191.8,614.9 1195.0,613.5 1198.1,612.8 1201.2,611.1 1204.3,610.2 1207.5,610.0 1210.6,608.9 1213.9,608.0 1217.2,606.7 1220.6,606.9 1223.9,605.7 1227.2,604.7 1230.7,602.5 1234.1,599.1 1237.6,597.0 1240.9,596.5 1244.3,594.6 1247.6,594.6 1251.0,593.1 1254.3,592.2 1257.4,590.6 1260.5,589.5 1263.7,588.6 1266.8,586.4 1269.9,584.8 1273.0,583.9 1276.5,582.5 1279.9,580.8 1283.4,579.3 1286.9,578.0 1290.3,576.4 1293.8,575.6 1297.2,574.0 1300.5,573.0 1303.9,571.8 1307.3,570.8 1310.9,570.8 1314.6,570.8" fill="none" stroke="#5b9fa1" stroke-width="2"/><circle cx="805" cy="709" r="3.2" fill="#fff" stroke="#a56ee8" stroke-width="2"/><circle cx="1021.4" cy="627.2" r="3.2" fill="#fff" stroke="#a56ee8" stroke-width="2"/><circle cx="589.3" cy="735" r="3.2" fill="#fff" stroke="#5b9fa1" stroke-width="2"/><circle cx="805" cy="735" r="3.2" fill="#fff" stroke="#5b9fa1" stroke-width="2"/><circle cx="1021.4" cy="655" r="3.2" fill="#fff" stroke="#5b9fa1" stroke-width="2"/><circle cx="1238" cy="597" r="3.2" fill="#fff" stroke="#5b9fa1" stroke-width="2"/></svg>
<div class="yl" style="left:530.7px;top:550.9000000000001px;">5,000</div>
<div class="yl" style="left:530.7px;top:586.1px;">4,000</div>
<div class="yl" style="left:530.7px;top:621.3000000000001px;">3,000</div>
<div class="yl" style="left:530.7px;top:656.5px;">2,000</div>
<div class="yl" style="left:530.7px;top:691.7px;">1,000</div>
<div class="yl" style="left:530.7px;top:726.9000000000001px;">0</div>
</body></html>
